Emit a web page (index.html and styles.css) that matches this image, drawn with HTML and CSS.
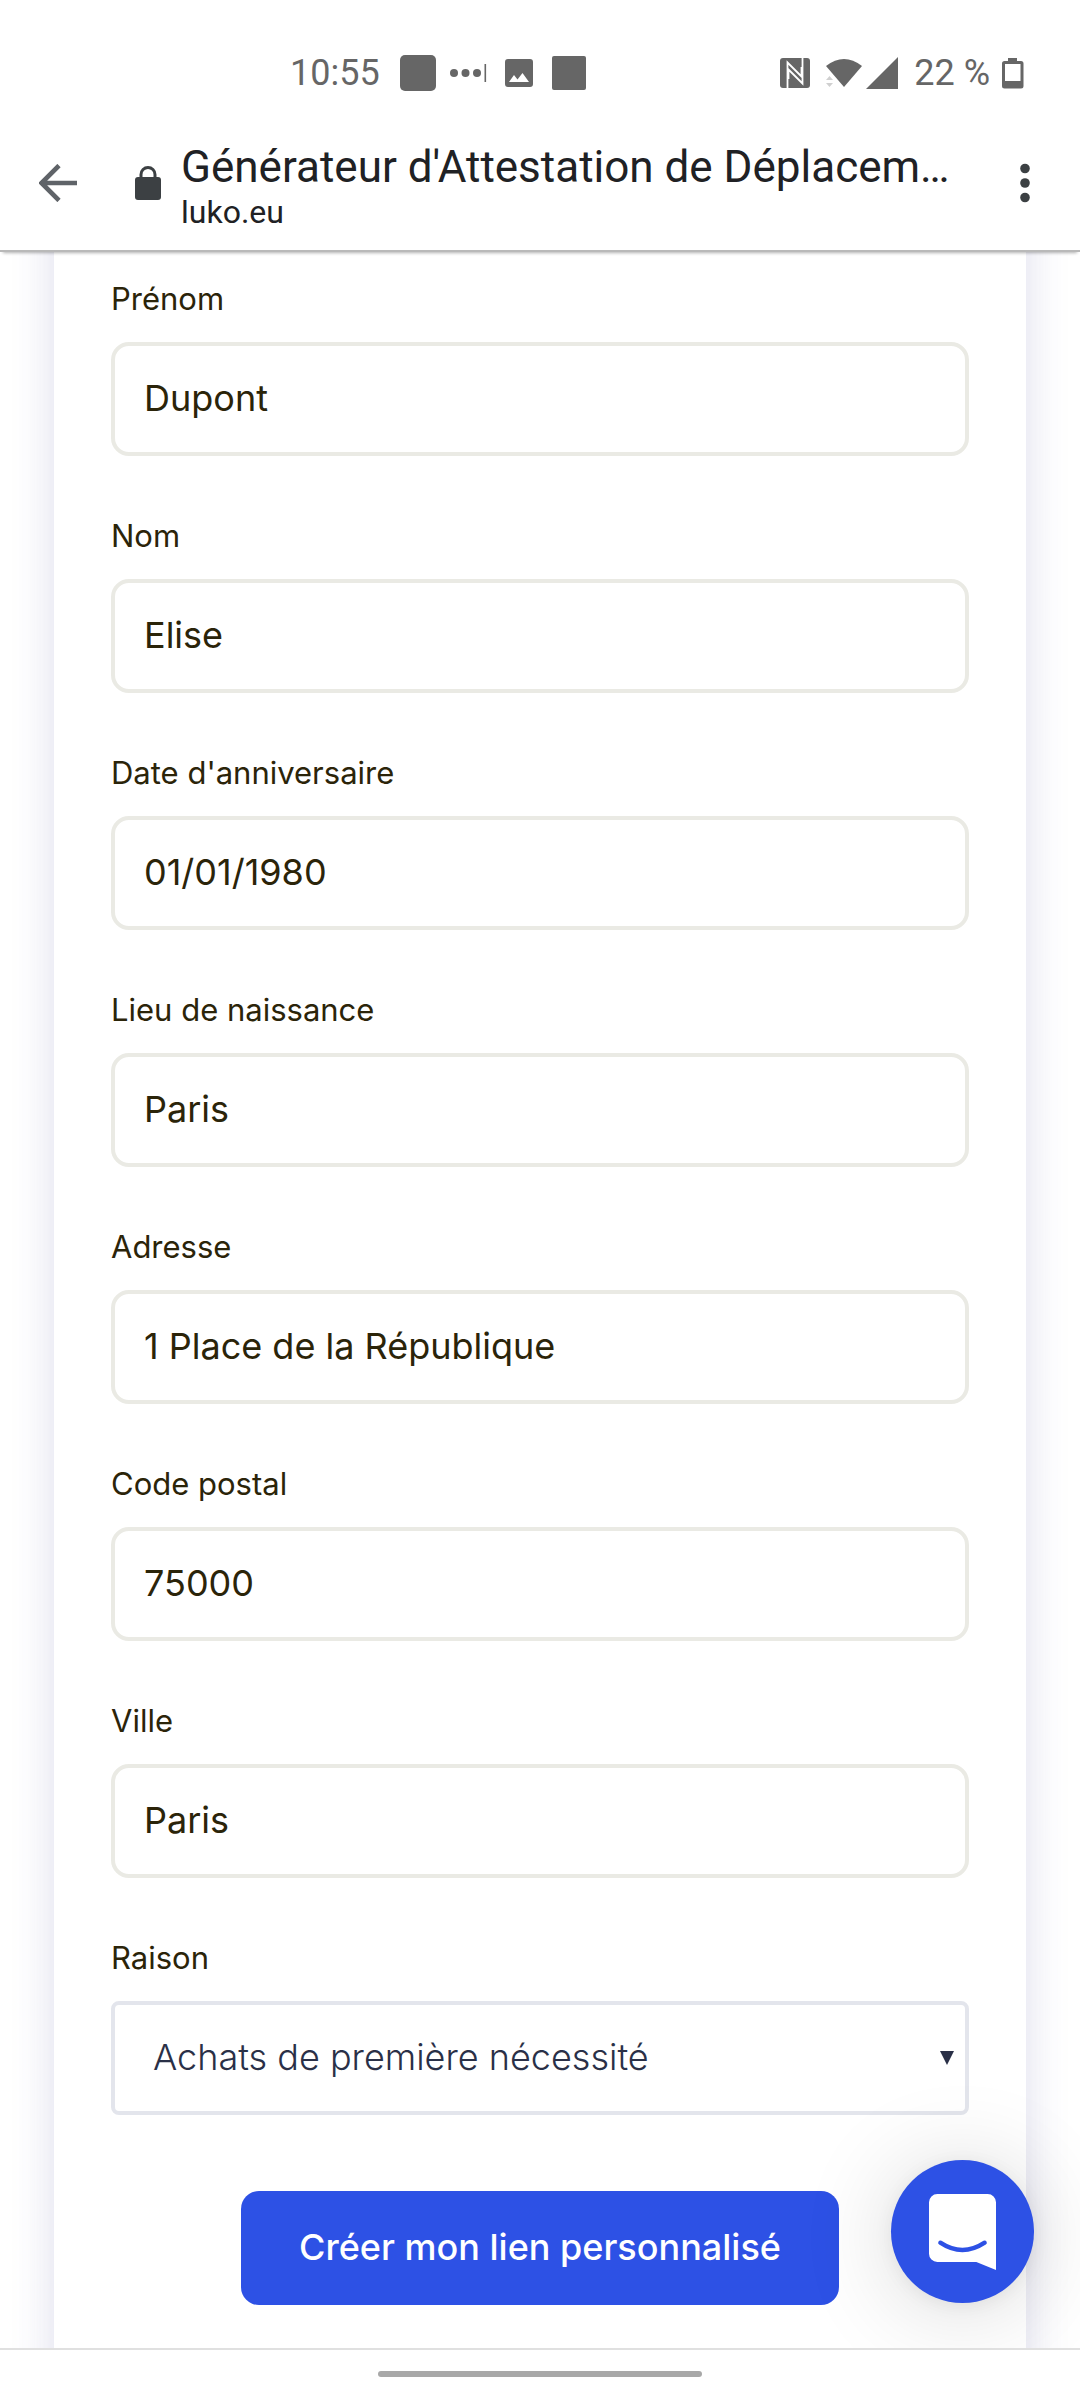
FILE: index.html
```
<!DOCTYPE html>
<html lang="fr">
<head>
<meta charset="UTF-8">
<meta name="viewport" content="width=device-width, initial-scale=1.0">
<title>Générateur d'Attestation de Déplacement</title>
<link rel="stylesheet" href="styles.css">
</head>
<body>
  <div class="status-bar">
    <div class="status-left">
      <span class="time">10:55</span>
      <svg width="36" height="36" viewBox="0 0 36 36"><rect width="36" height="36" rx="5"/></svg>
      <svg class="dots" width="37" height="20" viewBox="0 0 37 20">
        <circle cx="4" cy="10" r="4"/><circle cx="15.5" cy="10" r="4"/><circle cx="27" cy="10" r="4"/>
        <rect x="34.5" y="1" width="1.6" height="18"/>
      </svg>
      <svg class="photo" width="28" height="28" viewBox="0 0 28 28">
        <path fill-rule="evenodd" d="M3 0h22a3 3 0 0 1 3 3v22a3 3 0 0 1-3 3H3a3 3 0 0 1-3-3V3a3 3 0 0 1 3-3zM4 23h20l-6.500-9-5 6.500L9 16z"/>
      </svg>
      <svg width="34" height="34" viewBox="0 0 34 34"><rect width="34" height="34" rx="2"/></svg>
    </div>
    <div class="status-right">
      <svg class="nfc" width="30" height="30" viewBox="0 0 30 30">
        <rect width="30" height="30" rx="3"/>
        <path d="M7.500 30V4.500l14 14V9M22.500 0v25.500l-14-14V21" fill="none" stroke="#fff" stroke-width="1.800"/>
      </svg>
      <svg class="wifi" width="36" height="30" viewBox="0 0 36 30">
        <path d="M0 8Q18-6 36 8L18 29z"/>
        <path d="M0 22l3.500-4L7 22zM0 25h7l-3.500 4z" fill="#d0d0d0"/>
      </svg>
      <svg class="signal" width="32" height="32" viewBox="0 0 32 32"><path d="M32 0v32H0z"/></svg>
      <span class="percent">22 %</span>
      <svg width="22" height="31" viewBox="0 0 22 31">
        <path fill-rule="evenodd" d="M6 0h9v3h4a2.500 2.500 0 0 1 2.500 2.500V28A2.500 2.500 0 0 1 19 30.500H2.500A2.500 2.500 0 0 1 0 28V5.500A2.500 2.500 0 0 1 2.500 3H6zM3 6v17h15.500V6z"/>
      </svg>
    </div>
  </div>

  <header class="toolbar">
    <button class="icon-button" type="button" aria-label="Retour">
      <svg width="38" height="38" viewBox="0 0 38 38"><path d="M20 1.500L2.500 19 20 36.500M2.500 19H38" fill="none" stroke="#5f6368" stroke-width="4.600"/></svg>
    </button>
    <svg class="lock" width="26" height="34" viewBox="0 0 26 34">
      <path d="M6 13V8.500a7 7 0 0 1 14 0V13" fill="none" stroke="#3c4043" stroke-width="3"/>
      <rect y="11" width="26" height="23" rx="3" fill="#3c4043"/>
    </svg>
    <div class="page-info">
      <div class="page-title">Générateur d'Attestation de Déplacem…</div>
      <div class="page-url">luko.eu</div>
    </div>
    <button class="icon-button" type="button" aria-label="Menu">
      <svg width="10" height="40" viewBox="0 0 10 40" fill="#3c4043"><circle cx="5" cy="5.500" r="4.800"/><circle cx="5" cy="20" r="4.800"/><circle cx="5" cy="34.500" r="4.800"/></svg>
    </button>
  </header>

  <main class="page">
    <form class="card">
      <div class="field">
        <label for="prenom">Prénom</label>
        <input type="text" id="prenom" value="Dupont">
      </div>
      <div class="field">
        <label for="nom">Nom</label>
        <input type="text" id="nom" value="Elise">
      </div>
      <div class="field">
        <label for="anniversaire">Date d'anniversaire</label>
        <input type="text" id="anniversaire" value="01/01/1980">
      </div>
      <div class="field">
        <label for="naissance">Lieu de naissance</label>
        <input type="text" id="naissance" value="Paris">
      </div>
      <div class="field">
        <label for="adresse">Adresse</label>
        <input type="text" id="adresse" value="1 Place de la République">
      </div>
      <div class="field">
        <label for="code">Code postal</label>
        <input type="text" id="code" value="75000">
      </div>
      <div class="field">
        <label for="ville">Ville</label>
        <input type="text" id="ville" value="Paris">
      </div>
      <div class="field">
        <label for="raison">Raison</label>
        <div class="select">
          <select id="raison">
            <option>Achats de première nécessité</option>
          </select>
          <svg class="caret" width="14" height="14" viewBox="0 0 14 14"><path d="M0 0h14L7 14z"/></svg>
        </div>
      </div>
      <button class="submit" type="submit">Créer mon lien personnalisé</button>
    </form>

    <button class="chat" type="button" aria-label="Ouvrir le chat">
      <svg width="67" height="76" viewBox="0 0 201 228">
        <path d="M25 0h151a25 25 0 0 1 25 25v203l-59-24H25a25 25 0 0 1-25-25V25A25 25 0 0 1 25 0z" fill="#fff"/>
        <path d="M34 146q66 44 133 0" fill="none" stroke="#2d51e5" stroke-width="13" stroke-linecap="round"/>
      </svg>
    </button>
  </main>

  <footer class="nav-bar"><div class="nav-pill"></div></footer>
</body>
</html>
```
FILE: styles.css
```
* {
  box-sizing: border-box;
}

body {
  margin: 0;
  height: 100vh;
  display: flex;
  flex-direction: column;
  background: #fff;
  font-family: Inter, "Liberation Sans", sans-serif;
  color: #2b2409;
}

svg {
  display: block;
  flex: none;
}

button {
  border: none;
  padding: 0;
  background: none;
  font-family: inherit;
  cursor: pointer;
}

/* phone status bar */
.status-bar {
  display: flex;
  justify-content: space-between;
  padding: 48px 56px 18px 290px;
  font: 36px/50px Roboto, sans-serif;
  color: #666;
  fill: #666;
}

.status-left,
.status-right {
  display: flex;
  align-items: center;
}

.time {
  margin-right: 20px;
}

.dots {
  margin: 0 18px 0 14px;
}

.photo {
  margin-right: 19px;
}

.nfc,
.signal {
  margin-right: 16px;
}

.wifi {
  margin-right: 4px;
}

.percent {
  margin-right: 12px;
}

/* browser toolbar */
.toolbar {
  position: relative;
  z-index: 1;
  display: flex;
  align-items: center;
  height: 136px;
  padding: 0 50px 0 39px;
  border-bottom: 2px solid #b9b9b9;
  box-shadow: 0 4px 3px -3px rgba(0, 0, 0, 0.3);
  background: #fff;
  font-family: Roboto, sans-serif;
  color: #202124;
}

.lock {
  margin: 0 20px 0 58px;
}

.page-info {
  flex: 1;
  min-width: 0;
  padding-top: 6px;
}

.page-title {
  font-size: 44px;
  line-height: 52px;
  white-space: nowrap;
}

.page-url {
  font-size: 32px;
  line-height: 38px;
}

/* form */
.page {
  position: relative;
  flex: 1;
  min-height: 0;
  overflow: hidden;
}

/* runs past the top and bottom of the view, so the side shadow stays even */
.card {
  display: flex;
  flex-direction: column;
  margin: -48px 5% 0;
  padding: 75px 57px 100px;
  background: #fff;
  box-shadow: 0 0 40px rgba(60, 60, 150, 0.18);
}

.field {
  display: flex;
  flex-direction: column;
  margin-bottom: 60px;
}

.field label {
  margin-bottom: 23px;
  font-size: 31px;
  line-height: 40px;
}

.field input,
.field select {
  width: 100%;
  height: 114px;
  border: 4px solid #eaeae4;
  border-radius: 18px;
  padding: 0 29px 2px;
  background: #fff;
  font: 36px Inter, "Liberation Sans", sans-serif;
  color: inherit;
}

.select {
  position: relative;
}

.field select {
  appearance: none;
  border-color: #e3e5ec;
  border-radius: 8px;
  padding-left: 38px;
  font-weight: 300;
  color: #2a3047;
}

.caret {
  position: absolute;
  right: 15px;
  top: 50px;
  fill: #2a3047;
  pointer-events: none;
}

.submit {
  align-self: center;
  height: 114px;
  margin-top: 16px;
  padding: 0 58px 2px;
  border-radius: 18px;
  background: #2d51e5;
  font-size: 36px;
  font-weight: 500;
  color: #fff;
}

.chat {
  position: absolute;
  right: 46px;
  bottom: 45px;
  display: flex;
  align-items: center;
  justify-content: center;
  width: 143px;
  height: 143px;
  border-radius: 50%;
  background: #2d51e5;
  box-shadow: 0 3px 18px rgba(0, 0, 0, 0.06), 0 6px 96px rgba(0, 0, 0, 0.16);
}

/* gesture bar */
.nav-bar {
  display: flex;
  justify-content: center;
  height: 52px;
  padding-top: 21px;
  border-top: 2px solid #e0e0e0;
}

.nav-pill {
  width: 30%;
  height: 6px;
  border-radius: 3px;
  background: #a8a8a8;
}
```
